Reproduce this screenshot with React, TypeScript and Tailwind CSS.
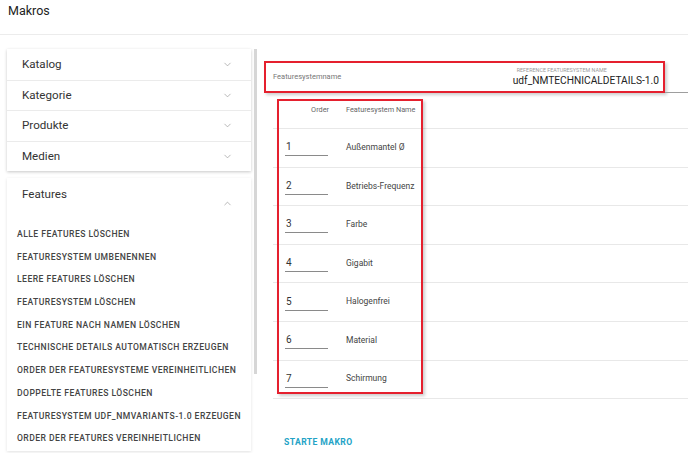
import { ChevronDown, ChevronUp } from "lucide-react";

/* ------------------ DATA ------------------ */
const sections = ["Katalog", "Kategorie", "Produkte", "Medien"];

const macros = [
  "Alle Features löschen",
  "Featuresystem umbenennen",
  "Leere Features löschen",
  "Featuresystem löschen",
  "Ein Feature nach Namen löschen",
  "Technische Details automatisch erzeugen",
  "Order der Featuresysteme vereinheitlichen",
  "Doppelte Features löschen",
  "Featuresystem udf_NMVARIANTS-1.0 erzeugen",
  "Order der Features vereinheitlichen",
];

const rows = [
  { order: 1, name: "Außenmantel Ø" },
  { order: 2, name: "Betriebs-Frequenz" },
  { order: 3, name: "Farbe" },
  { order: 4, name: "Gigabit" },
  { order: 5, name: "Halogenfrei" },
  { order: 6, name: "Material" },
  { order: 7, name: "Schirmung" },
];

/* ------------------ COMPONENT ------------------ */
export default function App() {
  return (
    <div className="h-[453px] w-[688px] overflow-hidden bg-white font-['Roboto',sans-serif] text-[#212121]">
      {/* --- HEADER --- */}
      <div className="h-[35px] border-b border-[#ececec] px-[8px] pt-[2px]">
        <h1 className="text-[12.5px] leading-[18px] text-[#222]">Makros</h1>
      </div>

      <div className="flex pt-[14px]">
        {/* --- LEFT COLUMN --- */}
        <div className="ml-[7px] w-[244px] shrink-0">
          <div className="bg-white shadow-[0_1px_3px_rgba(0,0,0,0.22)]">
            {sections.map((s, i) => (
              <div
                key={s}
                className={`flex h-[30.5px] items-center justify-between pl-[15px] pr-[18px] ${i > 0 ? "border-t border-[#ebebeb]" : ""}`}
              >
                <span className="text-[11.6px] text-[#333]">{s}</span>
                <ChevronDown size={11} strokeWidth={1.5} className="text-[#999]" />
              </div>
            ))}
          </div>

          <div className="mt-[7px] bg-white pb-[6px] shadow-[0_1px_3px_rgba(0,0,0,0.12)]">
            <div className="flex items-start justify-between pl-[15px] pr-[18px] pt-[8px]">
              <span className="text-[11.6px] text-[#333]">Features</span>
              <ChevronUp size={11} strokeWidth={1.5} className="mt-[12px] text-[#999]" />
            </div>
            <div className="mt-[19px] flex flex-col gap-[9.7px] pl-[10px]">
              {macros.map((m) => (
                <div
                  key={m}
                  className="text-[8.6px] font-medium uppercase leading-[13px] tracking-[0.45px] text-[#444]"
                >
                  {m}
                </div>
              ))}
            </div>
          </div>
        </div>

        {/* scrollbar */}
        <div className="ml-[3px] h-[325px] w-[3px] shrink-0 bg-[#d6d6d6]" />

        {/* --- RIGHT CONTENT --- */}
        <div className="ml-[7px] flex-1">
          {/* input row */}
          <div className="mt-[12px] flex items-end">
            <div className="flex h-[32px] w-[401px] items-center justify-between border-2 border-[#e5202e] bg-white pl-[7px] pr-[4px] shadow-[2px_2px_3px_rgba(0,0,0,0.2)]">
              <span className="text-[7.5px] text-[#777]">Featuresystemname</span>
              <div className="flex flex-col pt-[1px]">
                <span className="pl-[4px] text-[5.4px] uppercase leading-[7px] text-[#9a9a9a]">
                  Reference Featuresystem Name
                </span>
                <span className="text-[10.2px] leading-[14px] text-[#222]">udf_NMTECHNICALDETAILS-1.0</span>
              </div>
            </div>
            <div className="flex-1 border-b border-[#9e9e9e]" />
          </div>

          {/* table */}
          <div className="relative ml-[9px] mt-[6px]">
            <div className="flex h-[30px] border-b border-[#e8e8e8] pt-[6px] text-[7.3px] text-[#666]">
              <div className="w-[56px] text-right">Order</div>
              <div className="ml-[17px]">Featuresystem Name</div>
            </div>
            {rows.map((r) => (
              <div key={r.order} className="flex h-[38.6px] items-center border-b border-[#e8e8e8] pt-[1px]">
                <div className="ml-[12px] w-[43px] border-b border-[#8a8a8a] pb-[1px] pl-[1px] text-[10px] leading-[14px] text-[#333]">
                  {r.order}
                </div>
                <div className="ml-[18px] -mt-[2px] text-[8.5px] text-[#444]">{r.name}</div>
              </div>
            ))}
            {/* red annotation box */}
            <div className="pointer-events-none absolute left-[4px] top-0 h-[295px] w-[146px] border-2 border-[#e5202e] shadow-[2px_2px_3px_rgba(0,0,0,0.2)]" />
          </div>

          <div className="ml-[20px] mt-[37px] text-[8.6px] font-bold uppercase tracking-[0.4px] text-[#23a3c6]">
            Starte Makro
          </div>
        </div>
      </div>
    </div>
  );
}
